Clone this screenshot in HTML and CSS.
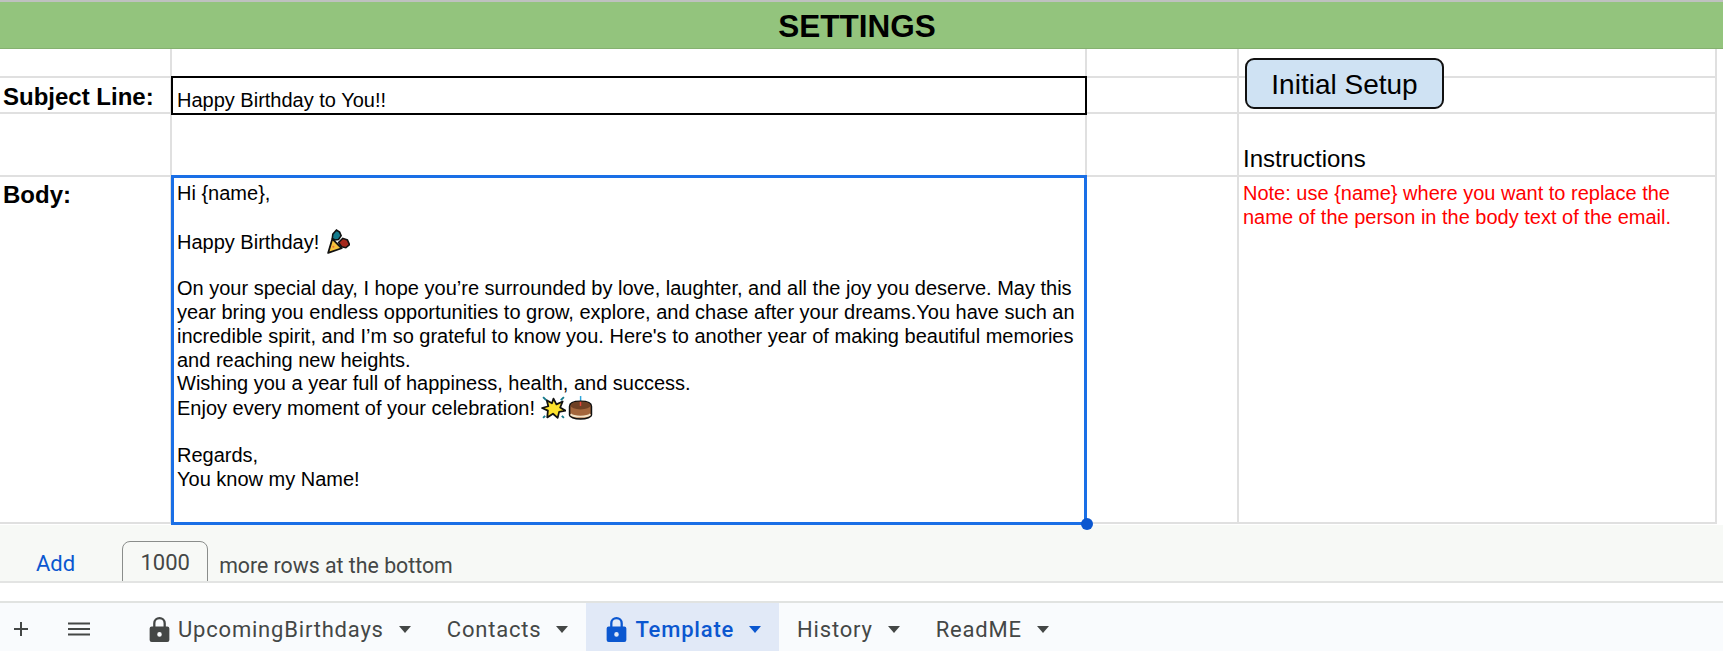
FILE: index.html
```html
<!DOCTYPE html>
<html lang="en">
<head>
<meta charset="utf-8">
<title>Settings</title>
<link rel="stylesheet" href="styles.css">
</head>
<body>
<main class="sheet">
  <h1 class="title">SETTINGS</h1>
  <div class="grid">
    <div class="cell"></div><div class="cell"></div><div class="cell"></div><div class="cell"></div><div class="cell last"></div>
    <div class="cell label">Subject Line:</div>
    <div class="cell subject">Happy Birthday to You!!</div>
    <div class="cell"></div><div class="cell"></div><div class="cell last"></div>
    <div class="cell"></div><div class="cell"></div><div class="cell"></div>
    <div class="cell instructions">Instructions</div><div class="cell last"></div>
    <div class="cell label body-label">Body:</div>
    <div class="cell body">
      <p>Hi {name},</p>
      <p class="blank"></p>
      <p>Happy Birthday! <svg class="emoji" viewBox="0 0 24 24"><path d="M3 23 L7 9.500 L16 18.500 Z" fill="#f7c23c" stroke="#111" stroke-width="1.700" stroke-linejoin="round"/><circle cx="8" cy="17" r="1" fill="#e8713a"/><path d="M7 9 l.5-4 L11 1 l3 2 1.500 3.500-2.500 3.500-3.500.5z" fill="#147a8c" stroke="#111" stroke-width="1.500"/><path d="M13 13 l4-4 4.500 1.500 2 4.500-3.500 3-4-1z" fill="#a5281c" stroke="#111" stroke-width="1.500"/></svg></p>
      <p class="blank"></p>
      <p>On your special day, I hope you’re surrounded by love, laughter, and all the joy you deserve. May this</p>
      <p>year bring you endless opportunities to grow, explore, and chase after your dreams.You have such an</p>
      <p>incredible spirit, and I’m so grateful to know you. Here's to another year of making beautiful memories</p>
      <p>and reaching new heights.</p>
      <p>Wishing you a year full of happiness, health, and success.</p>
      <p>Enjoy every moment of your celebration! <svg class="emoji" viewBox="0 0 24 24"><path d="M12 3.500 l2.800 5.500 6-2.800-2.400 5.800 5 3-6 1.200L16 22l-4.500-4L6 21.500l.6-6.500L1 12.500l6-1.700L5.500 5l5 3z" fill="#fde22e" stroke="#111" stroke-width="1.700" stroke-linejoin="round"/><path d="M2 2l3 3M22 2l-3 3M2 22l2-2M22 22l-2-2" stroke="#147a8c" stroke-width="1.800"/></svg><svg class="emoji cake" viewBox="0 0 24 24"><rect x="11.400" y="1" width="1.400" height="7" fill="#2aa5dc"/><path d="M1.500 11c0-3 4-5 10.500-5s10.500 2 10.500 5v8c0 2-4.500 4-10.500 4S1.500 21 1.500 19z" fill="#a4663c" stroke="#111" stroke-width="1.500"/><ellipse cx="12" cy="10" rx="9.500" ry="3.800" fill="#6e4024"/><path d="M2.500 18.500c3 3 16 3 19 0" stroke="#f3e2c6" stroke-width="1.800" fill="none"/><path d="M12 6.500v4" stroke="#e8443a" stroke-width="1.400"/></svg></p>
      <p class="blank"></p>
      <p>Regards,</p>
      <p>You know my Name!</p>
    </div>
    <div class="cell"></div>
    <div class="cell note">Note: use {name} where you want to replace the name of the person in the body text of the email.</div>
    <div class="cell last"></div>
  </div>
  <button class="setup" type="button">Initial Setup</button>
  <span class="handle"></span>
</main>

<section class="add-rows">
  <a class="add" href="#">Add</a>
  <span class="count">1000</span>
  <span class="more">more rows at the bottom</span>
</section>

<nav class="tabs">
  <svg class="tool plus" viewBox="0 0 16 16"><path d="M8 1v14M1 8h14" stroke="#444746" stroke-width="2"/></svg>
  <svg class="tool menu" viewBox="0 0 22 14"><path d="M0 1.500h22M0 7h22M0 12.500h22" stroke="#444746" stroke-width="2"/></svg>
  <div class="tab first">
    <svg class="lock" viewBox="0 0 20 26"><path d="M5 11V7a5 5 0 0 1 10 0v4" fill="none" stroke="currentColor" stroke-width="2.200"/><path fill-rule="evenodd" d="M2.500 10h15A2 2 0 0 1 19.500 12v11a2 2 0 0 1-2 2h-15a2 2 0 0 1-2-2V12a2 2 0 0 1 2-2zM10 15.500a2.200 2.200 0 1 0 0 4.400 2.200 2.200 0 0 0 0-4.400z" fill="currentColor"/></svg>
    <span>UpcomingBirthdays</span><i class="caret"></i>
  </div>
  <div class="tab"><span>Contacts</span><i class="caret"></i></div>
  <div class="tab active">
    <svg class="lock" viewBox="0 0 20 26"><path d="M5 11V7a5 5 0 0 1 10 0v4" fill="none" stroke="currentColor" stroke-width="2.200"/><path fill-rule="evenodd" d="M2.500 10h15A2 2 0 0 1 19.500 12v11a2 2 0 0 1-2 2h-15a2 2 0 0 1-2-2V12a2 2 0 0 1 2-2zM10 15.500a2.200 2.200 0 1 0 0 4.400 2.200 2.200 0 0 0 0-4.400z" fill="currentColor"/></svg>
    <span>Template</span><i class="caret"></i>
  </div>
  <div class="tab"><span>History</span><i class="caret"></i></div>
  <div class="tab"><span>ReadME</span><i class="caret"></i></div>
</nav>
</body>
</html>
```
FILE: styles.css
```css
* { box-sizing: border-box; }
html, body { margin: 0; height: 100%; overflow: hidden; background: #fff; }
body { font-family: "Liberation Sans", Arial, sans-serif; color: #000; }

.sheet { position: relative; height: 525px; border-top: 2px solid #bfc1c0; }
.title {
  margin: 0; height: 47px; padding: 1px 9px 0 0;
  background: #93c47d; border-bottom: 1px solid #85b170;
  font-size: 31.500px; line-height: 47px; font-weight: 700; text-align: center;
}
.grid {
  display: grid;
  grid-template-columns: 172px 915px 152px 478px 6px;
  grid-template-rows: 29px 36px 63px 347px;
  font-size: 20px; line-height: 24px;
}
.cell { border-right: 2px solid #e0e0e0; border-bottom: 2px solid #e0e0e0; min-width: 0; }
.cell.last { border: 0; }
.label { font-size: 24px; font-weight: 700; padding: 5px 0 0 3px; white-space: nowrap; line-height: 28px; }
.body-label { padding-top: 4px; }
.subject { border: 2px solid #000; margin: -2px 0 -1px -1px; padding: 10px 0 0 4px; background: #fff; z-index: 1; position: relative; }
.instructions { font-size: 24px; padding: 29px 0 0 4px; line-height: 32px; }
.body {
  border: 3px solid #1a6fe6; margin: -2px 0 -1px -1px; padding: 3px 0 0 3px;
  background: #fff; white-space: nowrap; position: relative; z-index: 1;
}
.body p { margin: 0; height: 23.800px; }
.note { color: #f00; padding: 4px 0 0 4px; }
.emoji { width: 25px; height: 25px; vertical-align: -5px; }
.cake { margin-left: 2px; }

.setup {
  position: absolute; left: 1245px; top: 56px; width: 199px; height: 51px; padding: 2px 0 0;
  background: #cfe2f3; border: 2px solid #111; border-radius: 9px;
  font: 28px "Liberation Sans", Arial, sans-serif; color: #000; z-index: 2;
}
.handle {
  position: absolute; left: 1081px; top: 516px; width: 12px; height: 12px;
  border-radius: 50%; background: #0b57d0; z-index: 3;
}

.add-rows {
  height: 58px; background: #f7f9f6; border-bottom: 2px solid #e3e4e3;
  display: flex; align-items: flex-start; overflow: hidden;
  font-family: Roboto, Arial, sans-serif; font-size: 21.300px; color: #444746;
}
.add { color: #0b57d0; text-decoration: none; margin: 27px 0 0 36px; line-height: 24px; font-size: 22px; }
.count {
  width: 86px; height: 48px; margin: 16px 0 0 47px; border: 1px solid #8a8d8b; border-radius: 8px;
  text-align: center; line-height: 42px; font-size: 22px;
}
.more { margin: 29px 0 0 11px; line-height: 24px; }

.tabs {
  margin-top: 18px; height: 50px; background: #f9fbfd; border-top: 2px solid #e1e3e1;
  display: flex; align-items: center; font-family: Roboto, Arial, sans-serif; font-size: 22px;
  letter-spacing: .8px; color: #444746;
}
.tool { flex: none; position: relative; top: 2px; }
.plus { width: 16px; height: 16px; margin-left: 13px; }
.menu { width: 22px; height: 14px; margin-left: 39px; }
.tab { height: 100%; display: flex; align-items: center; padding: 4px 18px 0; }
.tab.first { margin-left: 59px; padding-left: 0; }
.tab.active { background: #e1e9f7; color: #0b57d0; font-weight: 500; padding: 4px 18px 0 20px; }
.lock { width: 21px; height: 27px; margin-right: 8px; }
.caret { width: 0; height: 0; margin-left: 15px; border: 6.500px solid transparent; border-top: 7px solid currentColor; border-bottom: 0; }
```
